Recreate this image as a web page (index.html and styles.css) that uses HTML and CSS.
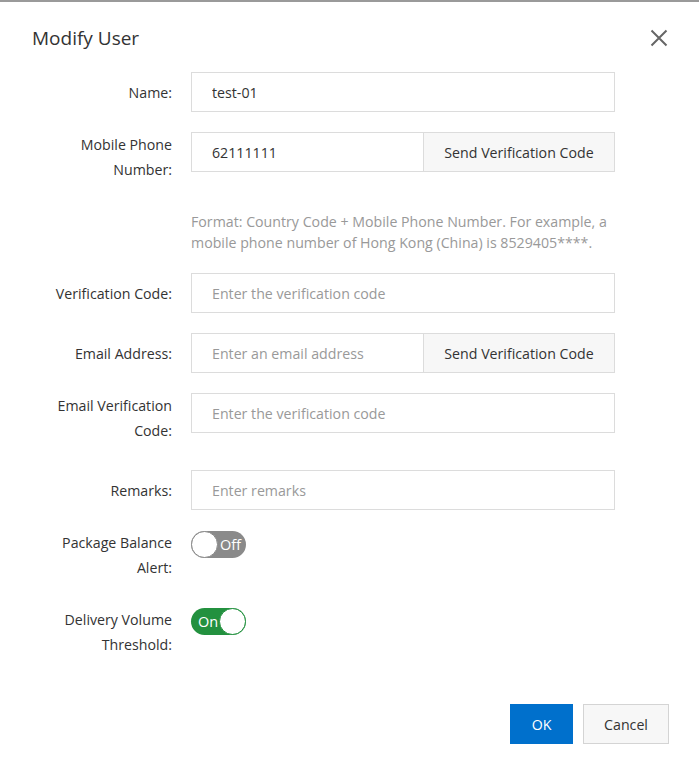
FILE: index.html
```html
<!DOCTYPE html>
<html lang="en">
<head>
    <meta charset="UTF-8">
    <title>Modify User</title>
    <link rel="stylesheet" href="styles.css">
</head>
<body>
    <div class="dialog">
        <div class="dialog-header">
            <h2 class="dialog-title">Modify User</h2>
            <button class="dialog-close" type="button" aria-label="Close">
                <svg width="18" height="18" viewBox="0 0 18 18" fill="none" xmlns="http://www.w3.org/2000/svg">
                    <path d="M1.5 1.5L16.5 16.5M16.5 1.5L1.5 16.5" stroke="#666" stroke-width="2"/>
                </svg>
            </button>
        </div>

        <form class="form">
            <div class="form-item">
                <label class="form-label">Name:</label>
                <div class="form-control">
                    <input class="input" type="text" value="test-01">
                </div>
            </div>

            <div class="form-item form-item-tight">
                <label class="form-label form-label-wrap">Mobile Phone Number:</label>
                <div class="form-control input-group">
                    <input class="input" type="text" value="62111111">
                    <button class="addon-btn" type="button">Send Verification Code</button>
                </div>
            </div>
            <p class="form-help">Format: Country Code + Mobile Phone Number. For example, a mobile phone number of Hong Kong (China) is 8529405****.</p>

            <div class="form-item">
                <label class="form-label">Verification Code:</label>
                <div class="form-control">
                    <input class="input" type="text" placeholder="Enter the verification code">
                </div>
            </div>

            <div class="form-item">
                <label class="form-label">Email Address:</label>
                <div class="form-control input-group">
                    <input class="input" type="text" placeholder="Enter an email address">
                    <button class="addon-btn" type="button">Send Verification Code</button>
                </div>
            </div>

            <div class="form-item">
                <label class="form-label form-label-wrap">Email Verification Code:</label>
                <div class="form-control">
                    <input class="input" type="text" placeholder="Enter the verification code">
                </div>
            </div>

            <div class="form-item">
                <label class="form-label">Remarks:</label>
                <div class="form-control">
                    <input class="input" type="text" placeholder="Enter remarks">
                </div>
            </div>

            <div class="form-item">
                <label class="form-label form-label-wrap">Package Balance Alert:</label>
                <div class="form-control">
                    <button class="switch" type="button"><span class="switch-knob"></span><span class="switch-text">Off</span></button>
                </div>
            </div>

            <div class="form-item">
                <label class="form-label form-label-wrap">Delivery Volume Threshold:</label>
                <div class="form-control">
                    <button class="switch switch-on" type="button"><span class="switch-text">On</span><span class="switch-knob"></span></button>
                </div>
            </div>
        </form>

        <div class="dialog-footer">
            <button class="btn btn-primary" type="button">OK</button>
            <button class="btn btn-normal" type="button">Cancel</button>
        </div>
    </div>
</body>
</html>
```

FILE: styles.css
```css
html, body {
    margin: 0;
    padding: 0;
    background: #fff;
}
body {
    font-family: 'Open Sans', 'Noto Sans', sans-serif;
    font-size: 14.2px;
    color: #333;
}
.dialog {
    width: 699px;
    height: 764px;
    box-sizing: border-box;
    border-top: 2px solid #9a9a9a;
    padding: 0 30px 0 32px;
    background: #fff;
}
.dialog-header {
    display: flex;
    justify-content: space-between;
    align-items: center;
    padding-top: 22px;
    margin-bottom: 20px;
}
.dialog-title {
    margin: 0;
    font-size: 19px;
    font-weight: 400;
    line-height: 28px;
    color: #333;
}
.dialog-close {
    border: none;
    background: none;
    padding: 0;
    margin-right: 1px;
    width: 18px;
    height: 18px;
    cursor: pointer;
}
.dialog-close svg {
    display: block;
}

.form {
    margin: 0;
}
.form-item {
    display: flex;
    margin-bottom: 20px;
}
.form-item-tight {
    margin-bottom: 0;
}
.form-label {
    width: 140px;
    margin-right: 19px;
    flex-shrink: 0;
    text-align: right;
    line-height: 25px;
    padding: 7.5px 0;
}
.form-label-wrap {
    padding: 0 0 7px 0;
    line-height: 25px;
}
.form-control {
    width: 424px;
}
.form-help {
    margin: 22px 0 20px 159px;
    width: 430px;
    color: #999;
    line-height: 21px;
}

.input {
    display: block;
    width: 100%;
    height: 40px;
    box-sizing: border-box;
    border: 1px solid #dcdcdc;
    padding: 0 20px;
    font-family: inherit;
    font-size: inherit;
    color: #333;
    background: #fff;
    outline: none;
}
.input::placeholder {
    color: #999;
}
.input-group {
    display: flex;
}
.input-group .input {
    flex: 1;
    border-right: none;
}
.addon-btn {
    width: 192px;
    height: 40px;
    flex-shrink: 0;
    border: 1px solid #dcdcdc;
    background: #f7f7f7;
    font-family: inherit;
    font-size: inherit;
    color: #333;
    cursor: pointer;
}

.switch {
    display: flex;
    align-items: center;
    justify-content: space-between;
    width: 55px;
    height: 27px;
    margin-top: 1px;
    padding: 0;
    border: none;
    border-radius: 14px;
    background: #8a8a8a;
    font-family: inherit;
    font-size: 14.5px;
    color: #fff;
    cursor: pointer;
}
.switch-knob {
    width: 27px;
    height: 27px;
    box-sizing: border-box;
    border-radius: 50%;
    border: 1px solid #8a8a8a;
    background: #fff;
}
.switch-text {
    margin-right: 5px;
}
.switch-on {
    background: #23913f;
}
.switch-on .switch-knob {
    border-color: #23913f;
}
.switch-on .switch-text {
    margin: 0 0 0 7px;
}

.dialog-footer {
    display: flex;
    justify-content: flex-end;
    gap: 10px;
    padding-top: 20px;
}
.btn {
    height: 40px;
    padding: 0 20px;
    font-family: inherit;
    font-size: inherit;
    cursor: pointer;
}
.btn-primary {
    min-width: 63px;
    border: 1px solid #0070cc;
    background: #0070cc;
    color: #fff;
}
.btn-normal {
    min-width: 86px;
    border: 1px solid #d4d4d4;
    background: #f7f7f7;
    color: #333;
}
```
